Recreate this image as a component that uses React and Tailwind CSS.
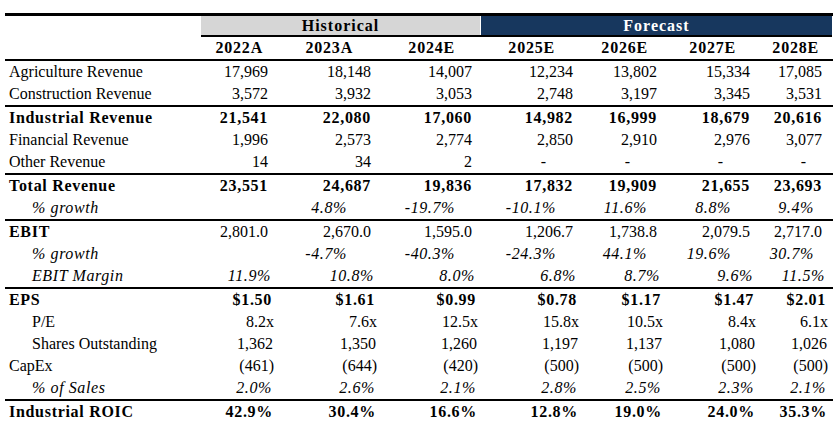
import React from 'react';

const COLS = 'grid grid-cols-[196px_67px_103px_101px_101px_84px_93px_72px_11px] items-center';

const Z = ['', '', '', '', '', '', ''];
const S3 = Array(7).fill('-mr-[3px]');
const S4 = Array(7).fill('-mr-[4px]');
const S5 = Array(7).fill('-mr-[5px]');
const S6 = Array(7).fill('-mr-[6px]');
const GROW = ['', 'pr-[24px]', 'pr-[17px]', 'pr-[17px]', 'pr-[10px]', 'pr-[19px]', 'pr-[8px]'];
const DASH = ['', '', '', 'pr-[27px]', 'pr-[27px]', 'pr-[27px]', 'pr-[16px]'];
const YEARPAD = ['pr-[5px]', 'pr-[18px]', 'pr-[17px]', 'pr-[18px]', 'pr-[9px]', 'pr-[14px]', 'pr-[3px]'];

const BOLD = 'font-bold tracking-[0.7px]';
const ITAL = 'italic tracking-[0.6px]';

const rows = [
  { label: 'Agriculture Revenue', v: ['17,969', '18,148', '14,007', '12,234', '13,802', '15,334', '17,085'], lab: '', val: '', pad: Z },
  { label: 'Construction Revenue', v: ['3,572', '3,932', '3,053', '2,748', '3,197', '3,345', '3,531'], lab: '', val: '', pad: Z, border: true },
  { label: 'Industrial Revenue', v: ['21,541', '22,080', '17,060', '14,982', '16,999', '18,679', '20,616'], lab: BOLD, val: BOLD, pad: Z },
  { label: 'Financial Revenue', v: ['1,996', '2,573', '2,774', '2,850', '2,910', '2,976', '3,077'], lab: '', val: '', pad: Z },
  { label: 'Other Revenue', v: ['14', '34', '2', '-', '-', '-', '-'], lab: '', val: '', pad: DASH, border: true },
  { label: 'Total Revenue', v: ['23,551', '24,687', '19,836', '17,832', '19,909', '21,655', '23,693'], lab: BOLD, val: BOLD, pad: Z },
  { label: '% growth', v: ['', '4.8%', '-19.7%', '-10.1%', '11.6%', '8.8%', '9.4%'], lab: ITAL, val: ITAL, pad: GROW, indent: true, border: true },
  { label: 'EBIT', v: ['2,801.0', '2,670.0', '1,595.0', '1,206.7', '1,738.8', '2,079.5', '2,717.0'], lab: BOLD, val: '', pad: Z },
  { label: '% growth', v: ['', '-4.7%', '-40.3%', '-24.3%', '44.1%', '19.6%', '30.7%'], lab: ITAL, val: ITAL, pad: GROW, indent: true },
  { label: 'EBIT Margin', v: ['11.9%', '10.8%', '8.0%', '6.8%', '8.7%', '9.6%', '11.5%'], lab: ITAL, val: ITAL, pad: S3, indent: true, border: true },
  { label: 'EPS', v: ['$1.50', '$1.61', '$0.99', '$0.78', '$1.17', '$1.47', '$2.01'], lab: BOLD, val: BOLD, pad: S4 },
  { label: 'P/E', v: ['8.2x', '7.6x', '12.5x', '15.8x', '10.5x', '8.4x', '6.1x'], lab: '', val: '', pad: S6, indent: true },
  { label: 'Shares Outstanding', v: ['1,362', '1,350', '1,260', '1,197', '1,137', '1,080', '1,026'], lab: '', val: '', pad: S5, indent: true },
  { label: 'CapEx', v: ['(461)', '(644)', '(420)', '(500)', '(500)', '(500)', '(500)'], lab: '', val: '', pad: S6 },
  { label: '% of Sales', v: ['2.0%', '2.6%', '2.1%', '2.8%', '2.5%', '2.3%', '2.1%'], lab: ITAL, val: ITAL, pad: S4, indent: true, border: true },
  { label: 'Industrial ROIC', v: ['42.9%', '30.4%', '16.6%', '12.8%', '19.0%', '24.0%', '35.3%'], lab: BOLD, val: BOLD, pad: S5 },
];

const years = ['2022A', '2023A', '2024E', '2025E', '2026E', '2027E', '2028E'];

function Row({ r }) {
  return (
    <div className={`${COLS} ${r.border ? 'h-[24px] border-b-2 border-black' : 'h-[22px]'}`}>
      <div className={`${r.indent ? 'pl-[27px]' : 'pl-[4px]'} ${r.lab} whitespace-nowrap`}>{r.label}</div>
      {r.v.map((x, i) => (
        <div key={i} className={`text-right whitespace-nowrap ${r.val} ${r.pad[i]}`}>{x}</div>
      ))}
      <div />
    </div>
  );
}

export default function App() {
  return (
    <div className="w-[839px] h-[425px] bg-white text-black font-['Liberation_Serif',serif] text-[16px] leading-[20px] pt-[13px] pl-[5px] overflow-hidden">
      <div className="w-[828px] border-t-[3px] border-black">
        <div className="flex h-[19px]">
          <div className="w-[196px]" />
          <div className="w-[279px] bg-[#d6d6d6] flex items-center justify-center font-bold tracking-[1px]">Historical</div>
          <div className="w-[1px]" />
          <div className="w-[351px] bg-[#17375e] text-white flex items-center justify-center font-bold tracking-[1px]">Forecast</div>
          <div className="w-[1px]" />
        </div>
        <div className="flex h-[2px]">
          <div className="w-[196px]" />
          <div className="w-[631px] bg-black" />
        </div>
        <div className={`${COLS} h-[24px] border-b-2 border-black`}>
          <div />
          {years.map((y, i) => (
            <div key={y} className={`text-right font-bold tracking-[0.8px] ${YEARPAD[i]}`}>{y}</div>
          ))}
          <div />
        </div>
        {rows.map((r, i) => (
          <Row key={i} r={r} />
        ))}
      </div>
    </div>
  );
}
